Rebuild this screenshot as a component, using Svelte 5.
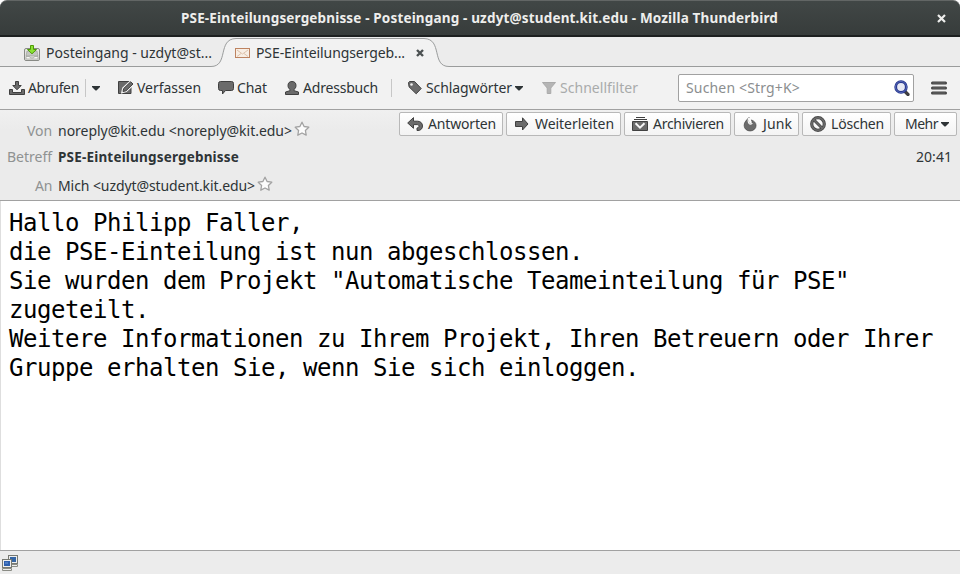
<script>
  // Spreads a label over its designed width by adjusting the tracking.
  function fit(node, width) {
    const apply = () => {
      node.style.letterSpacing = '0px';
      const natural = node.getBoundingClientRect().width;
      node.style.letterSpacing = `${(width - natural) / node.textContent.length}px`;
    };
    apply();
    document.fonts?.ready.then(apply);
  }

  const actions = [
    { icon: 'reply', label: 'Antworten', width: 104, text: 68 },
    { icon: 'forward', label: 'Weiterleiten', width: 115, text: 79 },
    { icon: 'archive', label: 'Archivieren', width: 107, text: 71 },
    { icon: 'junk', label: 'Junk', width: 65, text: 29 },
    { icon: 'delete', label: 'Löschen', width: 89, text: 53 }
  ];

  const body = [
    'Hallo Philipp Faller,',
    'die PSE-Einteilung ist nun abgeschlossen.',
    'Sie wurden dem Projekt "Automatische Teameinteilung für PSE"',
    'zugeteilt.',
    'Weitere Informationen zu Ihrem Projekt, Ihren Betreuern oder Ihrer',
    'Gruppe erhalten Sie, wenn Sie sich einloggen.'
  ];
</script>

{#snippet icon(name)}
  <svg class="icon" viewBox="0 0 16 16" width="16" height="16" fill="#6b6b6b" stroke="#404040" stroke-width="1">
    {#if name === 'fetch'}
      <path d="M.5 9.500h3v3h9v-3h3v5H.5z" />
      <path d="M6.500 1.500h3v4h2.700L8 9.800 3.800 5.500h2.700z" />
    {:else if name === 'write'}
      <path d="M.5 1.500h12.500v12H.5z" />
      <path d="M4.500 12l.8-3.500 7.500-7 2.700 2.500-7.500 7z" fill="#6b6b6b" stroke="#f2f2f2" stroke-width="2.400" />
      <path d="M5 11.500l.7-3 7-6.700 2.300 2.200-7 6.800z" />
    {:else if name === 'chat'}
      <path d="M2.500 1.500h11a2 2 0 0 1 2 2v5a2 2 0 0 1-2 2H7.500L4.500 14v-3.500h-2a2 2 0 0 1-2-2v-5a2 2 0 0 1 2-2z" />
    {:else if name === 'person'}
      <path d="M8 1.500c2.600 0 4 1.600 4 4 0 2-.8 3-2 4v1.200l4.500 1.300v2.500h-13V12L6 10.700V9.500c-1.200-1-2-2-2-4 0-2.400 1.400-4 4-4z" />
    {:else if name === 'tag'}
      <path d="M1.500 2.500l1-1h5l6.700 7-5 5.300-7.200-7z" />
      <circle cx="4.500" cy="4.500" r="1.300" fill="#f2f2f2" stroke="none" />
    {:else if name === 'filter'}
      <path d="M1.500 2.500h13L9.800 8v5.500H6.200V8z" fill="#b5b5b5" stroke="#aaa" />
    {:else if name === 'reply'}
      <path d="M.7 7l5.800-5.400v3.600h4c3 0 5 2 5 4.800s-2 4.500-4.500 4.500h-1V12c1.500-.3 2-1 2-1.800 0-1-.7-1.600-2-1.600H6.500v3.700z" />
    {:else if name === 'forward'}
      <path d="M1.500 5.500h7V1.800L14 8l-5.500 6v-3.500h-7z" />
    {:else if name === 'archive'}
      <path d="M4 1.500h9M2 3.500h13" />
      <path d="M.5 5.500h15v9H.5z" />
      <path d="M3.500 7.200L8 11.600l4.500-4.400" fill="none" stroke="#f6f6f6" stroke-width="2" />
    {:else if name === 'junk'}
      <path d="M7.200 1C6 3 6.300 5 7 6.800c.5 1.700 2.700 1.500 3-.2.200-1-.2-1.900-.7-2.700 3 .9 4.800 3 4.800 5.600a6 5.500 0 0 1-12 0C2.100 5.800 4.700 4.200 7.200 1z" stroke-width=".6" />
      <path d="M7 1.500C5.800 4 6 6 7 7.300c1 1.300 2.500 1 3.300-.3" fill="none" stroke="#f8f8f8" stroke-width="1.200" />
    {:else if name === 'delete'}
      <circle cx="8" cy="8" r="6.300" fill="none" stroke="#484848" stroke-width="3.200" />
      <path d="M3.800 3.800l8.400 8.400" stroke="#484848" stroke-width="3" />
      <circle cx="8" cy="8" r="6.300" fill="none" stroke="#6b6b6b" stroke-width="1.500" />
      <path d="M3.800 3.800l8.400 8.400" stroke="#6b6b6b" stroke-width="1.400" />
    {:else if name === 'star'}
      <path d="M8 1.200l2.100 4.300 4.700.7-3.400 3.300.8 4.700L8 12l-4.200 2.200.8-4.700L1.200 6.200l4.700-.7z" fill="#fcfcfc" stroke="#a2a2a2" stroke-width="1.300" stroke-linejoin="round" />
    {:else if name === 'inbox'}
      <rect x=".5" y="3.500" width="15" height="12" rx="1.500" fill="#e4e4e1" stroke="#888a85" />
      <path d="M3 6h10l1 5H2z" fill="#c4c6c1" stroke="#999b96" stroke-width=".6" />
      <path d="M2 11.500h3.500l1 1.500h3l1-1.500H14v2.500H2z" fill="#f7f7f5" stroke="#999b96" stroke-width=".7" />
      <path d="M6.500.5h3v4h3L8 8.800 3.500 4.500h3z" fill="#8ae234" stroke="#4e9a06" />
    {:else if name === 'mail'}
      <rect x="1.500" y="3.500" width="14" height="9" fill="#f8eee4" stroke="#bd8360" />
      <path d="M3 5l5.500 4L14 5M3 11.500l4-3M14 11.500l-4-3" fill="none" stroke="#d9bca4" stroke-width=".9" />
    {:else if name === 'search'}
      <path d="M10.500 11l3.500 3.500" stroke="#403f42" stroke-width="3.200" stroke-linecap="round" />
      <circle cx="7" cy="7" r="5.300" fill="#e7e9f4" stroke="#25358c" stroke-width="2.800" />
      <circle cx="7" cy="7" r="5.500" fill="none" stroke="#6375c3" stroke-width=".8" />
    {:else if name === 'menu'}
      <path d="M1.500 3h13M1.500 8h13M1.500 13h13" stroke="#404040" stroke-width="3" stroke-linecap="round" />
      <path d="M1.500 3h13M1.500 8h13M1.500 13h13" stroke="#6b6b6b" />
    {:else if name === 'online'}
      <rect x="6.500" y=".5" width="9" height="8" fill="#eee" stroke="#777972" />
      <rect x="8" y="2" width="6" height="5" fill="#3465a4" stroke="none" />
      <path d="M6.500 9.500h9v2h-9z" fill="#eee" stroke="#8a8c85" />
      <rect x=".5" y="4.500" width="9" height="8" fill="#eee" stroke="#777972" />
      <rect x="2" y="6" width="6" height="5" fill="#2d5fae" stroke="none" />
      <path d="M3 8h3" stroke="#6f9bdb" />
      <path d="M.5 13.500h9v2h-9z" fill="#eee" stroke="#8a8c85" />
    {/if}
  </svg>
{/snippet}

{#snippet caret()}
  <svg class="caret" width="8" height="5" viewBox="0 0 8 5"><path d="M0 0h8v1L4.500 4.500h-1L0 1z" fill="#2e3436" /></svg>
{/snippet}

<div class="window">
  <header class="title">
    <b><span use:fit={597}>PSE-Einteilungsergebnisse - Posteingang - uzdyt@student.kit.edu - Mozilla Thunderbird</span></b>
    <svg class="close" width="9" height="9" viewBox="0 0 9 9"><path d="M1 1l7 7M8 1L1 8" stroke="#eeeeec" stroke-width="2.200" /></svg>
  </header>

  <nav class="tabs">
    <svg class="outline" width="960" height="30" viewBox="0 0 960 30">
      <path d="M0 29.500H211C229 29.500 217 2 236 1.500H424C443 2 431 29.500 449 29.500H960V30H0z" fill="#f2f2f2" />
      <path d="M0 29.500H211C229 29.500 217 2 236 1.500H424C443 2 431 29.500 449 29.500H960" fill="none" stroke="#9a9c9c" />
    </svg>
    <div class="tab first">{@render icon('inbox')}<span use:fit={166}>Posteingang - uzdyt@st...</span></div>
    <div class="tab second">
      {@render icon('mail')}<span use:fit={149}>PSE-Einteilungsergeb...</span>
      <svg class="tabclose" width="8" height="8" viewBox="0 0 8 8"><path d="M1 1l6 6M7 1L1 7" stroke="#4c5152" stroke-width="2.400" /></svg>
    </div>
  </nav>

  <div class="toolbar">
    <div class="tool fetch">{@render icon('fetch')}<span use:fit={51}>Abrufen</span></div>
    <i class="bar"></i>
    <div class="drop">{@render caret()}</div>
    <div class="tool write">{@render icon('write')}<span use:fit={64}>Verfassen</span></div>
    <div class="tool chat">{@render icon('chat')}<span use:fit={30}>Chat</span></div>
    <div class="tool book">{@render icon('person')}<span use:fit={75}>Adressbuch</span></div>
    <i class="bar long"></i>
    <div class="tool tag">{@render icon('tag')}<span use:fit={86}>Schlagwörter</span>{@render caret()}</div>
    <div class="tool filter">{@render icon('filter')}<span use:fit={78}>Schnellfilter</span></div>
    <div class="search"><span use:fit={114}>Suchen &lt;Strg+K&gt;</span>{@render icon('search')}</div>
    <div class="menu">{@render icon('menu')}</div>
  </div>

  <section class="headers">
    <div class="fields">
      <div class="row from"><label><span use:fit={25}>Von</span></label><span use:fit={234}>noreply@kit.edu &lt;noreply@kit.edu&gt;</span>{@render icon('star')}</div>
      <div class="row subject"><label><span use:fit={45}>Betreff</span></label><b><span use:fit={181}>PSE-Einteilungsergebnisse</span></b></div>
      <div class="row to"><label><span use:fit={17}>An</span></label><span use:fit={197}>Mich &lt;uzdyt@student.kit.edu&gt;</span>{@render icon('star')}</div>
    </div>
    <div class="side">
      <div class="actions">
        {#each actions as a}
          <div class="button" style:width="{a.width}px">{@render icon(a.icon)}<span use:fit={a.text}>{a.label}</span></div>
        {/each}
        <div class="button more"><span use:fit={33}>Mehr</span>{@render caret()}</div>
      </div>
      <time><span use:fit={36}>20:41</span></time>
    </div>
  </section>

  <main>
    {#each body as line}<p>{line}</p>{/each}
  </main>

  <footer>{@render icon('online')}</footer>
</div>

<style>
  :global(body) { margin: 0; background: #fff; }
  .window {
    width: 960px; height: 574px; overflow: hidden; display: flex; flex-direction: column;
    font: 14px/20px "Noto Sans", "Open Sans", sans-serif; color: #2e3436; white-space: nowrap;
  }
  svg { display: block; flex: none; }
  span { display: inline-block; }
  .title {
    box-sizing: border-box; flex: none; height: 37px; display: flex; align-items: center;
    padding: 0 14px 0 181px; justify-content: space-between; color: #eeeeec;
    background: linear-gradient(#414746, #373c3b); border-top: 1px solid #626665;
    border-bottom: 2px solid #1d2020; border-radius: 7px 7px 0 0;
  }
  .title b { font-size: 13.500px; }
  .tabs { position: relative; flex: none; height: 30px; background: #ececec; display: flex; }
  .outline { position: absolute; inset: 0; }
  .tab { position: relative; display: flex; align-items: center; height: 32px; }
  .first { width: 210px; padding-left: 24px; gap: 6px; box-sizing: border-box; }
  .second { padding-left: 24px; gap: 6px; }
  .tabclose { margin-left: 5px; }
  .toolbar {
    box-sizing: border-box; flex: none; height: 43px; display: flex; align-items: center;
    background: #f2f2f2; border-bottom: 1px solid #a1a1a1;
  }
  .tool { display: flex; align-items: center; gap: 3px; }
  .fetch { padding-left: 9px; }
  .bar { width: 1px; height: 18px; background: #c7c7c7; margin-left: 6px; }
  .drop { width: 32px; padding-left: 6px; box-sizing: border-box; }
  .chat { margin-left: 17px; }
  .book { margin-left: 17px; }
  .long { margin-left: 13px; }
  .tag { margin-left: 15px; }
  .filter { margin-left: 18px; color: #a9abab; }
  .search {
    box-sizing: border-box; width: 236px; height: 28px; margin-left: 40px; border: 1px solid #a1a1a1;
    border-radius: 2px; background: #fff; color: #8b8e8f; display: flex; align-items: center;
    justify-content: space-between; padding: 0 3px 0 7px;
  }
  .menu { margin-left: 17px; }
  .headers {
    box-sizing: border-box; flex: none; height: 91px; display: flex; justify-content: space-between;
    background: linear-gradient(#f0f0f0, #ebebeb 20px); border-bottom: 1px solid #a1a1a1;
  }
  .fields { padding-top: 11px; }
  .row { display: flex; align-items: center; height: 20px; }
  .row label { width: 52px; text-align: right; color: #8f9292; margin-right: 6px; }
  .row .icon { margin: -4px 0 0 2px; }
  .subject { margin-top: 6px; }
  .subject b { font-size: 13.500px; }
  .to { margin-top: 9px; }
  .side { display: flex; flex-direction: column; align-items: flex-end; padding: 2px 3px 0 0; }
  .actions { display: flex; gap: 3px; }
  .button {
    box-sizing: border-box; height: 24px; border: 1px solid #b8b8b8; border-radius: 2px;
    background: linear-gradient(#fff, #f3f3f3); display: flex; align-items: center;
    padding-left: 7px; gap: 5px;
  }
  .more { width: 63px; padding-left: 10px; gap: 3px; }
  time { margin: 11px 5px 0 0; }
  main {
    flex: 1; box-sizing: border-box; padding: 8px 0 0 8px; border-left: 1px solid #dedede;
    font: 24px/29px "DejaVu Sans Mono", monospace; letter-spacing: -.448px; color: #000;
  }
  p { margin: 0; white-space: pre; }
  footer {
    flex: none; box-sizing: border-box; height: 24px; padding: 4px 0 0 2px;
    border-top: 1px solid #a1a1a1; background: #ececec;
  }
</style>
